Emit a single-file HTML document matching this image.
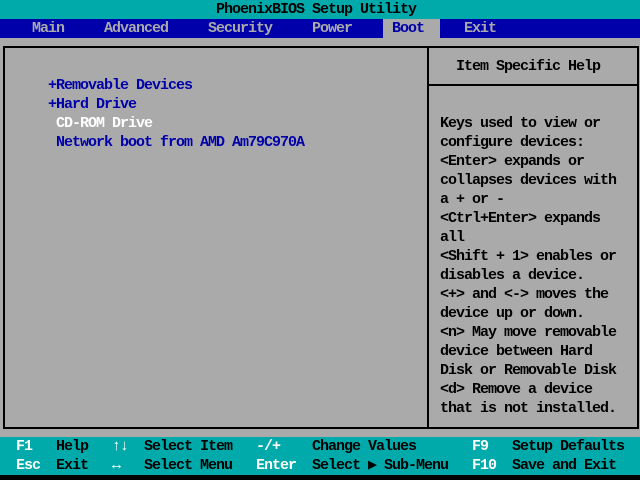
<!DOCTYPE html>
<html><head><style>
html,body{margin:0;padding:0;width:640px;height:480px;overflow:hidden;background:#000}
#s{position:relative;width:640px;height:480px;font-family:"Liberation Mono","DejaVu Sans Mono",monospace;font-size:15px;letter-spacing:-1px;line-height:19px;font-weight:bold}
.t{position:absolute;white-space:pre;height:19px}
.r{position:absolute}
</style></head><body><div id="s">
<div class="r" style="left:0;top:0;width:640px;height:19px;background:#00aaaa"></div>
<div class="r" style="left:0;top:19px;width:640px;height:19px;background:#0000aa"></div>
<div class="r" style="left:0;top:38px;width:640px;height:399px;background:#aaaaaa"></div>
<div class="r" style="left:0;top:437px;width:640px;height:38px;background:#00aaaa"></div>
<div class="r" style="left:383px;top:19px;width:57px;height:19px;background:#aaaaaa"></div>
<div class="r" style="left:3px;top:46px;width:632px;height:379px;border:2px solid #000"></div>
<div class="r" style="left:427px;top:46px;width:2px;height:381px;background:#000"></div>
<div class="r" style="left:427px;top:84px;width:210px;height:2px;background:#000"></div>

<div class="t" style="left:216px;top:0;color:#000">PhoenixBIOS Setup Utility</div>
<div class="t" style="left:32px;top:19px;color:#aaaaaa">Main</div>
<div class="t" style="left:104px;top:19px;color:#aaaaaa">Advanced</div>
<div class="t" style="left:208px;top:19px;color:#aaaaaa">Security</div>
<div class="t" style="left:312px;top:19px;color:#aaaaaa">Power</div>
<div class="t" style="left:392px;top:19px;color:#0000aa">Boot</div>
<div class="t" style="left:464px;top:19px;color:#aaaaaa">Exit</div>

<div class="t" style="left:48px;top:76px;color:#0000aa">+Removable Devices</div>
<div class="t" style="left:48px;top:95px;color:#0000aa">+Hard Drive</div>
<div class="t" style="left:56px;top:114px;color:#fff">CD-ROM Drive</div>
<div class="t" style="left:56px;top:133px;color:#0000aa">Network boot from AMD Am79C970A</div>

<div class="t" style="left:456px;top:57px;color:#000">Item Specific Help</div>
<div class="t" style="left:440px;top:114px;color:#000">Keys used to view or
configure devices:
&lt;Enter&gt; expands or
collapses devices with
a + or -
&lt;Ctrl+Enter&gt; expands
all
&lt;Shift + 1&gt; enables or
disables a device.
&lt;+&gt; and &lt;-&gt; moves the
device up or down.
&lt;n&gt; May move removable
device between Hard
Disk or Removable Disk
&lt;d&gt; Remove a device
that is not installed.</div>

<div class="t" style="left:16px;top:437px;color:#fff">F1</div>
<div class="t" style="left:56px;top:437px;color:#000">Help</div>
<div class="t" style="left:112px;top:437px;color:#fff">↑↓</div>
<div class="t" style="left:144px;top:437px;color:#000">Select Item</div>
<div class="t" style="left:256px;top:437px;color:#fff">-/+</div>
<div class="t" style="left:312px;top:437px;color:#000">Change Values</div>
<div class="t" style="left:472px;top:437px;color:#fff">F9</div>
<div class="t" style="left:512px;top:437px;color:#000">Setup Defaults</div>
<div class="t" style="left:16px;top:456px;color:#fff">Esc</div>
<div class="t" style="left:56px;top:456px;color:#000">Exit</div>
<div class="t" style="left:112px;top:456px;color:#fff">↔</div>
<div class="t" style="left:144px;top:456px;color:#000">Select Menu</div>
<div class="t" style="left:256px;top:456px;color:#fff">Enter</div>
<div class="t" style="left:312px;top:456px;color:#000">Select ▶ Sub-Menu</div>
<div class="t" style="left:472px;top:456px;color:#fff">F10</div>
<div class="t" style="left:512px;top:456px;color:#000">Save and Exit</div>
</div></body></html>
